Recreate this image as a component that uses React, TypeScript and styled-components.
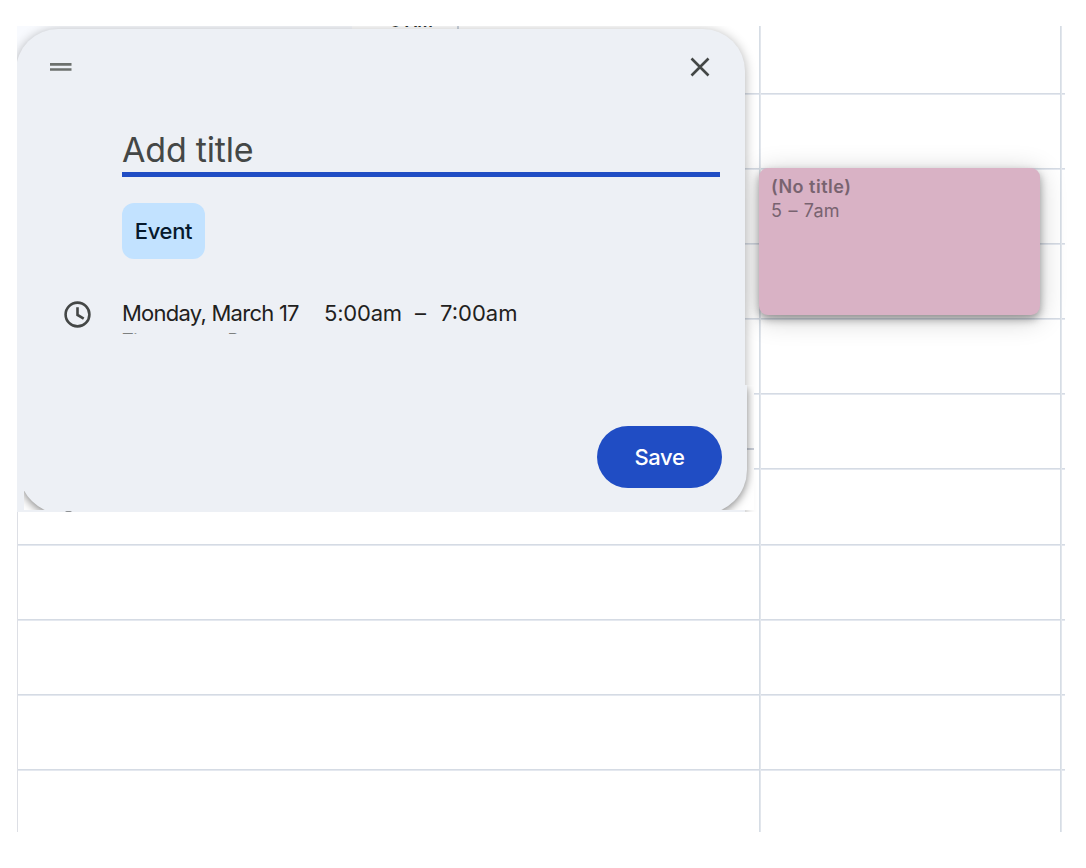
import React from "react";
import styled, { createGlobalStyle } from "styled-components";

const GlobalStyle = createGlobalStyle`
  * { box-sizing: border-box; }
  body {
    margin: 0;
    background: #fff;
    font-family: Inter, "Liberation Sans", sans-serif;
  }
`;

const Page = styled.main`
  width: 1086px;
  height: 868px;
  padding: 26px 21px 36px 17px;
  overflow: hidden;
`;

const Calendar = styled.section`
  position: relative;
  display: grid;
  grid-template-columns: 744px 302px 2px;
  width: 1048px;
  height: 806px;
`;

const DayColumn = styled.div<{ $first?: boolean }>`
  position: relative;
  display: flex;
  flex-direction: column;
  height: 806px;
  overflow: hidden;
  border-left: ${(p) => (p.$first ? "1px solid #dddfe5" : "0")};
`;

const Hour = styled.div<{ $height: number }>`
  flex: none;
  height: ${(p) => p.$height}px;
  border-bottom: 1px solid #d5dbe4;
  box-shadow: 0 1px 0 #e4e8ef;

  &:last-child {
    border-bottom: 0;
    box-shadow: none;
  }
`;

const ColumnLine = styled.div<{ $x: number }>`
  position: absolute;
  top: 0;
  left: ${(p) => p.$x}px;
  width: 2px;
  height: 806px;
  background: linear-gradient(90deg, #d6dde5 50%, #e2e6ec 50%);
`;

const EventCard = styled.article`
  position: absolute;
  top: 142px;
  left: 742px;
  width: 281px;
  height: 147px;
  padding: 7px 12px;
  border-radius: 9px;
  background: #d9b2c5;
  color: #786370;
  font-size: 18px;
  line-height: 24px;
  box-shadow: 0 4px 9px rgba(0, 0, 0, 0.36), 0 4px 28px rgba(0, 0, 0, 0.2);
`;

const EventTitle = styled.div`
  font-weight: 600;
  letter-spacing: 0.5px;
  white-space: nowrap;
`;

const EventTime = styled.div`
  letter-spacing: 0.2px;
  word-spacing: 1px;
  white-space: nowrap;
`;

const PopupFrame = styled.section`
  position: absolute;
  top: 0;
  left: 0;
  width: 742px;
  height: 486px;
  overflow: hidden;
`;

const TopStrip = styled.div`
  position: absolute;
  top: 0;
  left: 0;
  display: flex;
  width: 442px;
  height: 60px;
  border-right: 2px solid #ccd4de;
  background: linear-gradient(90deg, #f8fafe 335px, #fff 335px);
`;

const HourLabel = styled.span`
  margin: -15px 0 0 373px;
  color: #2a2e2c;
  font-size: 17px;
  font-weight: 600;
  line-height: 20px;
  height: 20px;
  white-space: nowrap;
`;

const Popup = styled.div`
  position: relative;
  display: flex;
  flex-direction: column;
  width: 729px;
  height: 530px;
  margin: 3px 0 0 -1px;
  border-radius: 42px;
  background: #edf0f5;
  box-shadow: 0 2px 12px rgba(0, 0, 0, 0.32);
`;

const PopupHeader = styled.header`
  display: flex;
  justify-content: space-between;
  align-items: center;
  height: 76px;
  padding: 0 35px 0 34px;
`;

const PopupBody = styled.div`
  display: flex;
  flex-direction: column;
  align-items: flex-start;
  padding: 23px 25px 0 106px;
`;

const TitleField = styled.div`
  width: 598px;
  height: 49px;
  border-bottom: 5px solid #204dc4;
  color: #444746;
  font-size: 34px;
  line-height: 44px;
  letter-spacing: -0.2px;
  white-space: nowrap;
`;

const EventTab = styled.button`
  width: 83px;
  height: 56px;
  margin-top: 26px;
  padding: 0;
  border: 0;
  border-radius: 12px;
  background: #c2e2ff;
  color: #06192d;
  font: 500 22px Inter, sans-serif;
  letter-spacing: -0.3px;
`;

const WhenRow = styled.div`
  display: flex;
  align-items: center;
  height: 30px;
  margin: 39px 0 0 -58px;
  color: #1f2120;
  font-size: 22px;
  line-height: 30px;
  white-space: nowrap;
`;

const WhenDate = styled.span`
  width: 202px;
  margin-left: 31px;
  letter-spacing: -0.75px;
`;

const WhenStart = styled.span`
  width: 91px;
  letter-spacing: -0.2px;
`;

const WhenDash = styled.span`
  width: 25px;
`;

const WhenDetails = styled.div`
  height: 6px;
  padding-top: 2px;
  overflow: hidden;
  color: #7d807f;
  font-size: 18px;
  line-height: 22px;
  letter-spacing: -0.3px;
  white-space: nowrap;
`;

const FooterFrame = styled.footer`
  position: absolute;
  top: 359px;
  left: 7px;
  width: 730px;
  height: 125px;
  overflow: hidden;
  background: linear-gradient(#ccd1da, #ccd1da) 723px 63px / 7px 2px no-repeat #fff;
`;

const FooterPanel = styled.div`
  display: flex;
  justify-content: flex-end;
  width: 728px;
  height: 129px;
  margin-left: -5px;
  padding: 41px 25px 0 0;
  border-radius: 0 0 44px 44px;
  background: #edf0f5;
  box-shadow: 0 2px 10px rgba(0, 0, 0, 0.5);
`;

const SaveButton = styled.button`
  width: 125px;
  height: 62px;
  padding: 0;
  border: 0;
  border-radius: 31px;
  background: #204dc4;
  color: #fff;
  font: 500 22px Inter, sans-serif;
  letter-spacing: -0.4px;
`;

const IconSpeck = styled.span`
  position: absolute;
  top: 485px;
  left: 48px;
  width: 7px;
  height: 2px;
  border-radius: 2px 2px 0 0;
  background: #8d9093;
`;

const hours = [68, 75, 75, 75, 75, 75, 76, 75, 75, 75, 61];

const Hours = () => (
  <>
    {hours.map((height, i) => (
      <Hour key={i} $height={height} />
    ))}
  </>
);

const DragIcon = () => (
  <svg width="22" height="10" viewBox="0 0 22 10">
    <path d="M0 2.3h21.5M0 7.5h21.5" stroke="#6c706d" strokeWidth="2.7" />
  </svg>
);

const CloseIcon = () => (
  <svg width="20" height="20" viewBox="0 0 20 20">
    <path d="M1.5 1.5l17 17m0-17l-17 17" stroke="#444746" strokeWidth="2.6" fill="none" />
  </svg>
);

const ClockSvg = styled.svg`
  flex: none;
  margin-top: 2px;
`;

const ClockIcon = () => (
  <ClockSvg width="27" height="27" viewBox="0 0 27 27" fill="none" stroke="#444746" strokeWidth="2.6">
    <circle cx="13.5" cy="13.5" r="11.9" />
    <path d="M13.5 6.2v7.7l6.2 3.8" />
  </ClockSvg>
);

export default function App() {
  return (
    <Page>
      <GlobalStyle />
      <Calendar>
        <DayColumn $first>
          <Hours />
        </DayColumn>
        <DayColumn>
          <Hours />
        </DayColumn>
        <DayColumn>
          <Hours />
        </DayColumn>
        <ColumnLine $x={742} />
        <ColumnLine $x={1043} />
        <EventCard>
          <EventTitle>(No title)</EventTitle>
          <EventTime>5 – 7am</EventTime>
        </EventCard>
        <PopupFrame>
          <TopStrip>
            <HourLabel>5 AM</HourLabel>
          </TopStrip>
          <Popup>
            <PopupHeader>
              <DragIcon />
              <CloseIcon />
            </PopupHeader>
            <PopupBody>
              <TitleField>Add title</TitleField>
              <EventTab>Event</EventTab>
              <WhenRow>
                <ClockIcon />
                <WhenDate>Monday, March 17</WhenDate>
                <WhenStart>5:00am</WhenStart>
                <WhenDash>–</WhenDash>
                <span>7:00am</span>
              </WhenRow>
              <WhenDetails>Time zone • Does not repeat</WhenDetails>
            </PopupBody>
          </Popup>
          <IconSpeck />
          <FooterFrame>
            <FooterPanel>
              <SaveButton>Save</SaveButton>
            </FooterPanel>
          </FooterFrame>
        </PopupFrame>
      </Calendar>
    </Page>
  );
}
